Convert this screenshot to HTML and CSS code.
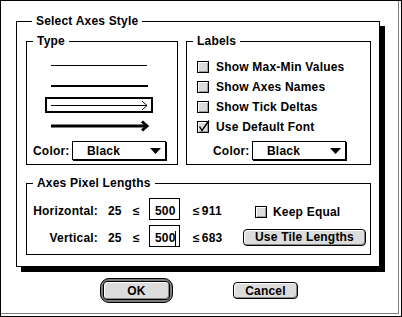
FILE: index.html
```html
<!DOCTYPE html>
<html>
<head>
<meta charset="utf-8">
<title>Select Axes Style</title>
<link rel="stylesheet" href="styles.css">
</head>
<body>
<div class="frame">
  <div class="dialog">
    <div class="group main">
      <div class="group-title">Select Axes Style</div>
      <div class="top-row">
        <div class="group type">
          <div class="group-title">Type</div>
          <div class="styles">
            <div class="style-opt">
              <svg width="108" height="16"><line x1="6" y1="8.5" x2="102" y2="8.5" stroke="#000" stroke-width="1"/></svg>
            </div>
            <div class="style-opt">
              <svg width="108" height="16"><line x1="6" y1="9" x2="103" y2="9" stroke="#000" stroke-width="2"/></svg>
            </div>
            <div class="style-opt selected">
              <svg width="108" height="16"><line x1="6" y1="8.5" x2="102" y2="8.5" stroke="#000" stroke-width="1"/><polyline points="97,4 102,8.5 97,13" fill="none" stroke="#000" stroke-width="1"/></svg>
            </div>
            <div class="style-opt">
              <svg width="108" height="16"><line x1="6" y1="9" x2="101" y2="9" stroke="#000" stroke-width="3"/><polyline points="97,4.5 102,9 97,13.5" fill="none" stroke="#000" stroke-width="3"/></svg>
            </div>
          </div>
          <div class="color-row">
            <span class="color-label">Color:</span>
            <div class="popup"><span>Black</span><svg class="tri" width="11" height="6"><polygon points="0,0 11,0 5.5,6" fill="#000"/></svg></div>
          </div>
        </div>
        <div class="group labels">
          <div class="group-title">Labels</div>
          <div class="checks">
            <div class="check-row"><span class="checkbox"></span><span>Show Max-Min Values</span></div>
            <div class="check-row"><span class="checkbox"></span><span>Show Axes Names</span></div>
            <div class="check-row"><span class="checkbox"></span><span>Show Tick Deltas</span></div>
            <div class="check-row"><span class="checkbox checked"><svg width="13" height="13"><path d="M2.5 6.5 L5 10.5 L12 0.5" fill="none" stroke="#000" stroke-width="1.4"/></svg></span><span>Use Default Font</span></div>
          </div>
          <div class="color-row labels-color">
            <span class="color-label">Color:</span>
            <div class="popup"><span>Black</span><svg class="tri" width="11" height="6"><polygon points="0,0 11,0 5.5,6" fill="#000"/></svg></div>
          </div>
        </div>
      </div>
      <div class="group axes">
        <div class="group-title">Axes Pixel Lengths</div>
        <div class="axes-grid">
          <span class="ax-label">Horizontal:</span>
          <span class="ax-min">25</span>
          <span class="ax-le">≤</span>
          <span class="field">500</span>
          <span class="ax-max"><span class="le">≤</span><span class="maxv">911</span></span>
          <span class="ax-extra"><span class="check-row keep"><span class="checkbox"></span><span>Keep Equal</span></span></span>

          <span class="ax-label">Vertical:</span>
          <span class="ax-min">25</span>
          <span class="ax-le">≤</span>
          <span class="field">500<span class="caret"></span></span>
          <span class="ax-max"><span class="le">≤</span><span class="maxv">683</span></span>
          <span class="ax-extra"><span class="btn tile">Use Tile Lengths</span></span>
        </div>
      </div>
    </div>
    <div class="buttons">
      <span class="default-ring"><span class="btn ok">OK</span></span>
      <span class="btn cancel">Cancel</span>
    </div>
  </div>
</div>
</body>
</html>
```

FILE: styles.css
```css
* { box-sizing: border-box; }
html, body { margin: 0; padding: 0; background: #fff; }
body {
  font-family: "Liberation Sans", Arial, sans-serif;
  font-weight: bold;
  font-size: 12px;
  line-height: 14px;
  color: #000;
  letter-spacing: 0.2px;
}
.frame {
  width: 402px;
  height: 317px;
  border: 1px solid #000;
  background: #fff;
}
.dialog {
  width: 398px;
  height: 313px;
  border-right: 1px solid #808080;
  border-bottom: 1px solid #808080;
  padding-top: 20px;
  padding-left: 15px;
}
.group {
  border: 1px solid #000;
  background: #fff;
}
.group-title {
  width: fit-content;
  margin: -8px 0 0 6px;
  padding: 0 4px;
  background: #fff;
  white-space: nowrap;
}
.main {
  width: 364px;
  height: 246px;
  box-shadow: 5px 5px 0 #000;
  padding: 0 0 0 9px;
}
.top-row {
  display: flex;
  gap: 8px;
  margin-top: 13px;
}
.type {
  width: 152px;
  height: 124px;
}
.labels {
  width: 185px;
  height: 124px;
}
.styles {
  display: flex;
  flex-direction: column;
  gap: 4px;
  margin-top: 9px;
  padding-left: 18px;
}
.style-opt {
  width: 108px;
  height: 16px;
}
.style-opt svg { display: block; }
.style-opt.selected { box-shadow: inset 0 0 0 2px #000; }
.color-row {
  display: flex;
  align-items: center;
  margin-top: 8px;
  padding-left: 6px;
}
.labels-color {
  margin-top: 4px;
  padding-left: 26px;
}
.color-label { width: 39px; }
.popup {
  width: 94px;
  height: 19px;
  border: 1px solid #000;
  box-shadow: 1px 1px 0 #000;
  display: flex;
  align-items: center;
  justify-content: space-between;
  padding: 0 4px 0 14px;
}
.tri { display: block; }
.checks {
  margin-top: 9px;
  padding-left: 10px;
}
.check-row {
  display: flex;
  align-items: center;
  height: 20px;
  gap: 7px;
  white-space: nowrap;
}
.checkbox {
  width: 12px;
  height: 12px;
  flex: none;
  border: 1px solid #000;
  background: #dcdcdc;
  box-shadow: inset 1px 1px 0 #fff, inset -1px -1px 0 #9a9a9a;
  position: relative;
}
.checkbox.checked svg {
  position: absolute;
  left: -1px;
  top: -2px;
}
.axes {
  width: 345px;
  height: 72px;
  margin-top: 18px;
}
.axes-grid {
  display: grid;
  grid-template-columns: 71px 35px 16px 31px 63px auto;
  grid-template-rows: 24px 24px;
  row-gap: 3px;
  align-items: center;
  margin-top: 7px;
}
.ax-label, .ax-min, .ax-le, .ax-max { padding-top: 4px; }
.ax-label { text-align: right; white-space: nowrap; }
.ax-min { padding-left: 10px; }
.field {
  height: 22px;
  border: 1px solid #000;
  padding: 4px 0 0 5px;
  display: flex;
  align-items: center;
}
.caret {
  display: inline-block;
  width: 1px;
  height: 15px;
  background: #000;
  margin-left: -1px;
}
.ax-max { padding-left: 13px; white-space: nowrap; }
.maxv { margin-left: 2px; }
.ax-extra { display: flex; }
.keep { padding-left: 12px; gap: 6px; margin-top: 6px; }
.tile { width: 123px; margin-top: 2px; }
.btn {
  display: inline-flex;
  align-items: center;
  justify-content: center;
  height: 17px;
  border: 1px solid #000;
  border-radius: 4px;
  background: #dcdcdc;
  box-shadow: inset 1px 1px 0 #fff, inset -1px -1px 0 #888;
  white-space: nowrap;
}
.buttons {
  display: flex;
  align-items: center;
  gap: 60px;
  margin-top: 11px;
  padding-left: 84px;
}
.default-ring {
  display: inline-flex;
  border: 1px solid #000;
  border-radius: 9px;
  padding: 2px;
  background: #7c7c7c;
}
.ok { width: 67px; height: 19px; }
.cancel { width: 65px; }
```
